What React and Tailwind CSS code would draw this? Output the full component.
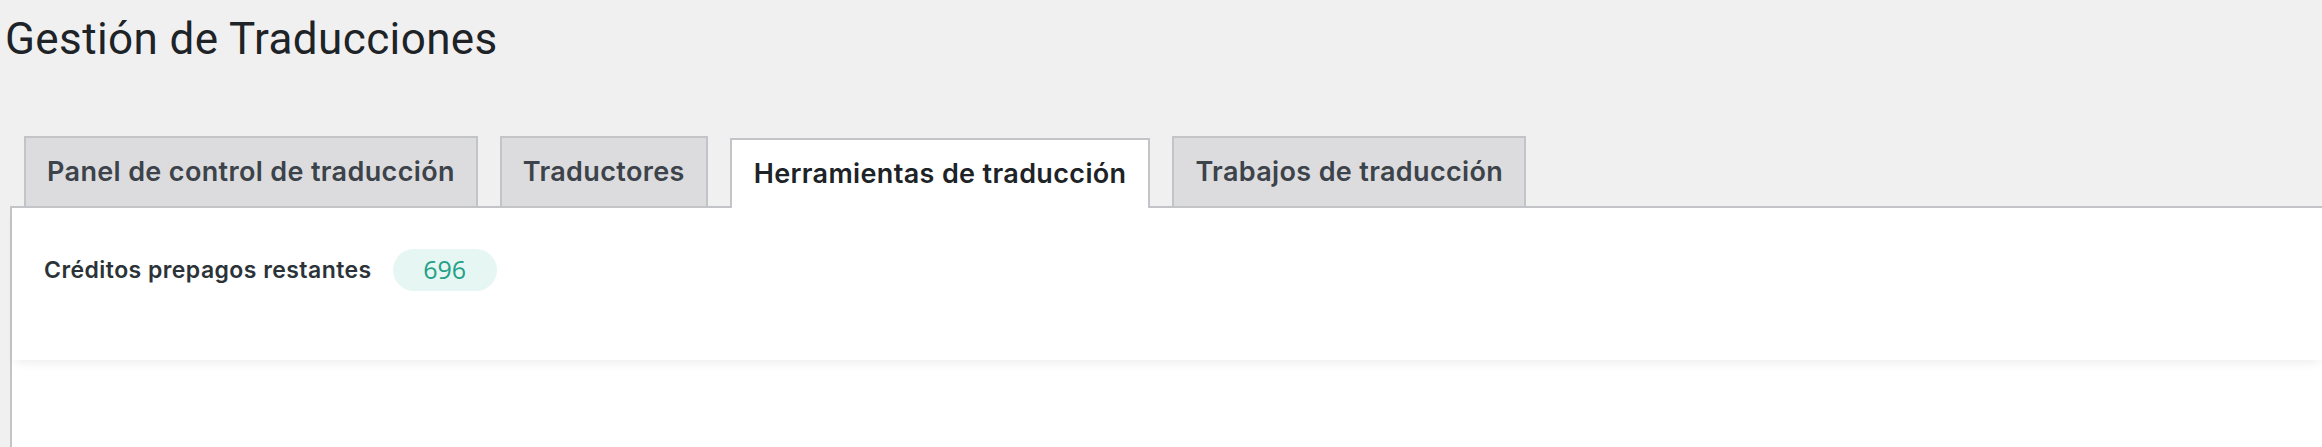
import React from "react";

const TABS = [
  { label: "Panel de control de traducción" },
  { label: "Traductores" },
  { label: "Herramientas de traducción", active: true },
  { label: "Trabajos de traducción" },
];

export default function App() {
  return (
    <div className="min-h-[447px] bg-[#f0f0f1] font-['Roboto',sans-serif] overflow-hidden">
      <div className="pl-[5px] pt-[13px]">
        <h1 className="text-[44px] leading-[52px] font-normal tracking-[0.4px] text-[#1d2327]">Gestión de Traducciones</h1>
      </div>

      <div className="ml-[10px] mt-[71px]">
        {/* Tabs */}
        <div className="relative z-10 mb-[-2px] flex items-end gap-[22px] pl-[14px] font-['Inter',sans-serif] tracking-[0.35px]">
          {TABS.map((tab) =>
            tab.active ? (
              <div
                key={tab.label}
                className="flex h-[70px] items-center border-2 border-b-0 border-[#c3c4c7] bg-white px-[22px] text-[27px] font-semibold text-[#1d2327]"
              >
                {tab.label}
              </div>
            ) : (
              <div
                key={tab.label}
                className="flex h-[72px] items-center border-2 border-[#c3c4c7] bg-[#dcdcde] px-[21px] text-[27px] font-semibold text-[#3c434a]"
              >
                {tab.label}
              </div>
            )
          )}
        </div>

        {/* Panel */}
        <div className="h-[260px] border-l-2 border-t-2 border-[#c3c4c7] bg-white">
          <div className="h-[152px] bg-white pl-[32px] pt-[41px] shadow-[0_6px_10px_-3px_rgba(0,0,0,0.07)]">
            <div className="flex items-center gap-[21px]">
              <span className="font-['Inter',sans-serif] text-[23px] font-semibold tracking-[0.45px] text-[#2c3338]">Créditos prepagos restantes</span>
              <span className="flex h-[42px] w-[104px] items-center justify-center rounded-full bg-[#e6f6f2] font-['Open_Sans',sans-serif] text-[25px] text-[#23a088]">
                696
              </span>
            </div>
          </div>
        </div>
      </div>
    </div>
  );
}
